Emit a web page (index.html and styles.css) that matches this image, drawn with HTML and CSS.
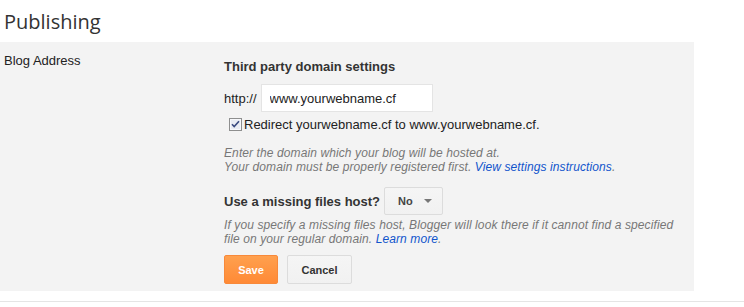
FILE: index.html
```html
<!DOCTYPE html>
<html lang="en">
<head>
    <meta charset="UTF-8">
    <meta name="viewport" content="width=device-width, initial-scale=1.0">
    <title>Publishing</title>
    <link rel="stylesheet" href="styles.css">
</head>
<body>
    <h1 class="page-title">Publishing</h1>

    <div class="panel">
        <div class="row-label">Blog Address</div>
        <div class="row-body">
            <h2 class="section-title">Third party domain settings</h2>

            <div class="domain-row">
                <span class="prefix">http://</span>
                <input class="domain-input" type="text" value="www.yourwebname.cf">
            </div>

            <label class="check-row">
                <svg class="check-box" width="13" height="13" viewBox="0 0 13 13">
                    <rect x="0.5" y="0.5" width="12" height="12" fill="#dfe3ec" stroke="#8e8f8f"/>
                    <rect x="1.5" y="1.5" width="10" height="10" fill="#e9ecf3" stroke="#f7f8fb"/>
                    <path d="M3 6.2 L5.2 8.6 L10 3.2" fill="none" stroke="#3a4a80" stroke-width="1.6"/>
                </svg>
                Redirect yourwebname.cf to www.yourwebname.cf.
            </label>

            <p class="hint">Enter the domain which your blog will be hosted at.<br>
                Your domain must be properly registered first. <a href="#">View settings instructions</a>.</p>

            <div class="host-row">
                <span class="host-label">Use a missing files host?</span>
                <button class="select-btn">No <span class="arrow"></span></button>
            </div>

            <p class="hint">If you specify a missing files host, Blogger will look there if it cannot find a specified<br>
                file on your regular domain. <a href="#">Learn more</a>.</p>

            <div class="actions">
                <button class="btn btn-save">Save</button>
                <button class="btn btn-cancel">Cancel</button>
            </div>
        </div>
    </div>

    <div class="divider"></div>
</body>
</html>
```

FILE: styles.css
```css
body {
    margin: 0;
    font-family: Arial, "Liberation Sans", sans-serif;
    font-size: 13px;
    color: #222;
    background: white;
}

.page-title {
    margin: 0;
    height: 39px;
    padding: 3px 0 0 4px;
    font-family: "Open Sans", sans-serif;
    font-weight: normal;
    font-size: 20px;
    line-height: 38px;
    color: #333;
}

.panel {
    display: flex;
    width: 694px;
    height: 249px;
    background-color: #f3f3f3;
}

.row-label {
    width: 220px;
    padding: 11px 0 0 4px;
    font-size: 13px;
    line-height: 15px;
}

.row-body {
    padding-top: 17px;
}

.section-title {
    margin: 0;
    font-size: 13px;
    line-height: 15px;
    font-weight: bold;
    color: #333;
}

.domain-row {
    display: flex;
    align-items: center;
    margin-top: 10px;
}

.prefix {
    margin-right: 4px;
}

.domain-input {
    box-sizing: border-box;
    width: 172px;
    height: 28px;
    padding: 0 8px;
    border: 1px solid #e4e4e4;
    background: white;
    font-family: Arial, "Liberation Sans", sans-serif;
    font-size: 13px;
    color: #222;
    outline: none;
}

.check-row {
    display: flex;
    align-items: center;
    margin-top: 5px;
    padding-left: 5px;
    line-height: 15px;
}

.check-box {
    margin-right: 2px;
    margin-top: -1px;
}

.hint {
    margin: 0;
    font-size: 12px;
    line-height: 14px;
    font-style: italic;
    color: #777;
    letter-spacing: 0.1px;
}

.check-row + .hint {
    margin-top: 14px;
}

.hint a {
    color: #15c;
    text-decoration: none;
}

.host-row {
    display: flex;
    align-items: center;
    margin-top: 13px;
}

.host-label {
    font-weight: bold;
    font-size: 13px;
    color: #333;
    margin-right: 4px;
}

.select-btn {
    box-sizing: border-box;
    width: 59px;
    height: 28px;
    padding: 0 0 0 13px;
    display: flex;
    align-items: center;
    border: 1px solid #dcdcdc;
    border-radius: 2px;
    background: linear-gradient(#f5f5f5, #f1f1f1);
    font-family: Arial, "Liberation Sans", sans-serif;
    font-size: 11px;
    font-weight: bold;
    color: #444;
}

.arrow {
    width: 0;
    height: 0;
    margin-left: 11px;
    border-left: 4px solid transparent;
    border-right: 4px solid transparent;
    border-top: 4px solid #777;
}

.host-row + .hint {
    margin-top: 3px;
}

.actions {
    display: flex;
    gap: 9px;
    margin-top: 9px;
}

.btn {
    box-sizing: border-box;
    height: 29px;
    border-radius: 2px;
    font-family: Arial, "Liberation Sans", sans-serif;
    font-size: 11px;
    font-weight: bold;
    cursor: pointer;
}

.btn-save {
    width: 54px;
    border: 1px solid #f8893a;
    background: linear-gradient(#ffa04e, #ff8a36);
    color: white;
}

.btn-cancel {
    width: 65px;
    border: 1px solid #dcdcdc;
    background: linear-gradient(#f5f5f5, #f1f1f1);
    color: #333;
}

.divider {
    margin-top: 10px;
    height: 1px;
    background-color: #e5e5e5;
}
```
